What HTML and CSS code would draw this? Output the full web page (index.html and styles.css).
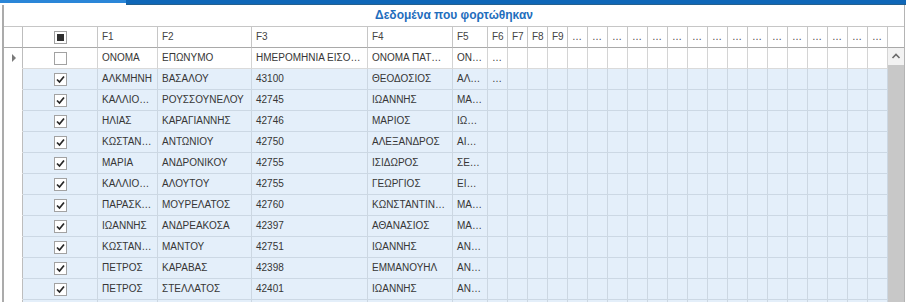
FILE: index.html
```html
<!DOCTYPE html>
<html lang="el">
<head>
  <meta charset="UTF-8">
  <title>Δεδομένα που φορτώθηκαν</title>
  <link rel="stylesheet" href="styles.css">
</head>
<body>
<div class="tabs">
  <div class="tab-on"></div>
  <div class="tab-rest"></div>
</div>
<div class="panel">
  <h1 class="caption">Δεδομένα που φορτώθηκαν</h1>
  <div class="table-area">
    <div class="grid"></div>
    <div class="vscroll">
      <div class="vs-head"></div>
      <div class="vs-up">
        <svg width="16" height="17" viewBox="0 0 16 17"><polyline points="4.5,10 8,6.5 11.5,10" fill="none" stroke="#6b6b6b" stroke-width="1.6"/></svg>
      </div>
      <div class="vs-thumb"></div>
    </div>
  </div>
</div>

<script>
  var rows = [
    [0, 'ΟΝΟΜΑ', 'ΕΠΩΝΥΜΟ', 'ΗΜΕΡΟΜΗΝΙΑ ΕΙΣΟ…', 'ΟΝΟΜΑ ΠΑΤ…', 'ΟΝ…', '…'],
    [1, 'ΑΛΚΜΗΝΗ', 'ΒΑΣΑΛΟΥ', '43100', 'ΘΕΟΔΟΣΙΟΣ', 'ΑΛ…', '…'],
    [1, 'ΚΑΛΛΙΟ…', 'ΡΟΥΣΣΟΥΝΕΛΟΥ', '42745', 'ΙΩΑΝΝΗΣ', 'ΜΑ…', ''],
    [1, 'ΗΛΙΑΣ', 'ΚΑΡΑΓΙΑΝΝΗΣ', '42746', 'ΜΑΡΙΟΣ', 'ΙΩ…', ''],
    [1, 'ΚΩΣΤΑΝ…', 'ΑΝΤΩΝΙΟΥ', '42750', 'ΑΛΕΞΑΝΔΡΟΣ', 'ΑΙ…', ''],
    [1, 'ΜΑΡΙΑ', 'ΑΝΔΡΟΝΙΚΟΥ', '42755', 'ΙΣΙΔΩΡΟΣ', 'ΣΕ…', ''],
    [1, 'ΚΑΛΛΙΟ…', 'ΑΛΟΥΤΟΥ', '42755', 'ΓΕΩΡΓΙΟΣ', 'ΕΙ…', ''],
    [1, 'ΠΑΡΑΣΚ…', 'ΜΟΥΡΕΛΑΤΟΣ', '42760', 'ΚΩΝΣΤΑΝΤΙΝ…', 'ΜΑ…', ''],
    [1, 'ΙΩΑΝΝΗΣ', 'ΑΝΔΡΕΑΚΟΣΑ', '42397', 'ΑΘΑΝΑΣΙΟΣ', 'ΜΑ…', ''],
    [1, 'ΚΩΣΤΑΝ…', 'ΜΑΝΤΟΥ', '42751', 'ΙΩΑΝΝΗΣ', 'ΑΝ…', ''],
    [1, 'ΠΕΤΡΟΣ', 'ΚΑΡΑΒΑΣ', '42398', 'ΕΜΜΑΝΟΥΗΛ', 'ΑΝ…', ''],
    [1, 'ΠΕΤΡΟΣ', 'ΣΤΕΛΛΑΤΟΣ', '42401', 'ΙΩΑΝΝΗΣ', 'ΑΝ…', ''],
    [1, '', '', '', '', '', '']
  ]
  var extraCols = 19

  var grid = document.querySelector('.grid')

  function cell(cls, html) {
    var d = document.createElement('div')
    d.className = 'cell ' + cls
    d.innerHTML = html
    grid.appendChild(d)
  }

  var checkMark = '<svg width="11" height="11" viewBox="0 0 11 11"><polyline points="2,5.5 4.5,8 9,2.5" fill="none" stroke="#262626" stroke-width="1.7"/></svg>'

  // header
  cell('ind hd', '')
  cell('chk hd', '<span class="cb part"></span>')
  ;['F1', 'F2', 'F3', 'F4', 'F5', 'F6', 'F7', 'F8', 'F9'].forEach(n => cell('hd', n))
  for (var i = 0; i < 16; i++) cell('hd', '…')

  // rows
  rows.forEach((r, idx) => {
    var on = r[0] ? ' on' : ''
    cell('ind', idx === 0 ? '<span class="cur"></span>' : '')
    cell('chk' + on, '<span class="cb">' + (r[0] ? checkMark : '') + '</span>')
    for (var c = 1; c < r.length; c++) cell('td' + on, r[c])
    for (var e = 0; e < extraCols; e++) cell('td' + on, '')
  })
</script>
</body>
</html>
```

FILE: styles.css
```css
body {
  margin: 0;
  height: 302px;
  overflow: hidden;
  background: #fff;
  color: #363636;
  font-family: "Liberation Sans", Arial, sans-serif;
  font-size: 10px;
}

.tabs {
  display: flex;
  align-items: flex-start;
  height: 5px;
  margin-right: 3px;
}

.tab-on {
  width: 126px;
  height: 3px;
  background: #2a86d8;
}

.tab-rest {
  flex: 1;
  height: 4px;
  background: #0f67b8;
  border-bottom: 1px solid #24608f;
}

.panel {
  width: 900px;
  margin-left: 2px;
  border-left: 2px solid #ababab;
  border-right: 1px solid #b4b4b4;
}

.caption {
  margin: 0;
  height: 21px;
  line-height: 21px;
  text-align: center;
  font-size: 12px;
  font-weight: bold;
  color: #1f6ebd;
}

.table-area {
  display: flex;
  height: 276px;
  overflow: hidden;
  border-top: 1px solid #c6c6c6;
}

.grid {
  display: grid;
  grid-template-columns: 19px 75px 60px 94px 116px 85px 35px repeat(20, 20px);
  grid-auto-rows: 21px;
  width: 884px;
  align-content: start;
}

.cell {
  box-sizing: border-box;
  padding: 0 1px 0 4px;
  line-height: 20px;
  white-space: nowrap;
  overflow: hidden;
  border-right: 1px solid #d4d4d4;
  border-bottom: 1px solid #dadada;
}

.hd {
  color: #444;
  border-right-color: #c6c6c6;
  border-bottom-color: #a9a9a9;
}

.ind {
  padding: 0;
  border-right-color: #bdbdbd;
  border-bottom-color: transparent;
  display: flex;
  align-items: center;
  justify-content: center;
}

.ind.hd {
  border-bottom-color: #a9a9a9;
}

.cur {
  width: 0;
  height: 0;
  margin-left: 2px;
  border-left: 4px solid #7a7a7a;
  border-top: 4px solid transparent;
  border-bottom: 4px solid transparent;
}

.chk {
  padding: 0;
  display: flex;
  align-items: center;
  justify-content: center;
}

.on {
  background: #e4effa;
  border-right-color: #ccd7e2;
  border-bottom-color: #ccd8e4;
}

.cb {
  box-sizing: border-box;
  width: 13px;
  height: 13px;
  border: 1px solid #a2a2a2;
  background: #fff;
  display: flex;
  align-items: center;
  justify-content: center;
}

.cb.part::after {
  content: "";
  width: 7px;
  height: 7px;
  background: #2e2e2e;
}

.vscroll {
  width: 16px;
  display: flex;
  flex-direction: column;
}

.vs-head {
  height: 21px;
  box-sizing: border-box;
  border-bottom: 1px solid #a9a9a9;
}

.vs-up {
  height: 17px;
  background: #f2f2f2;
}

.vs-up svg {
  display: block;
}

.vs-thumb {
  flex: 1;
  background: #c8c8c8;
}
```
